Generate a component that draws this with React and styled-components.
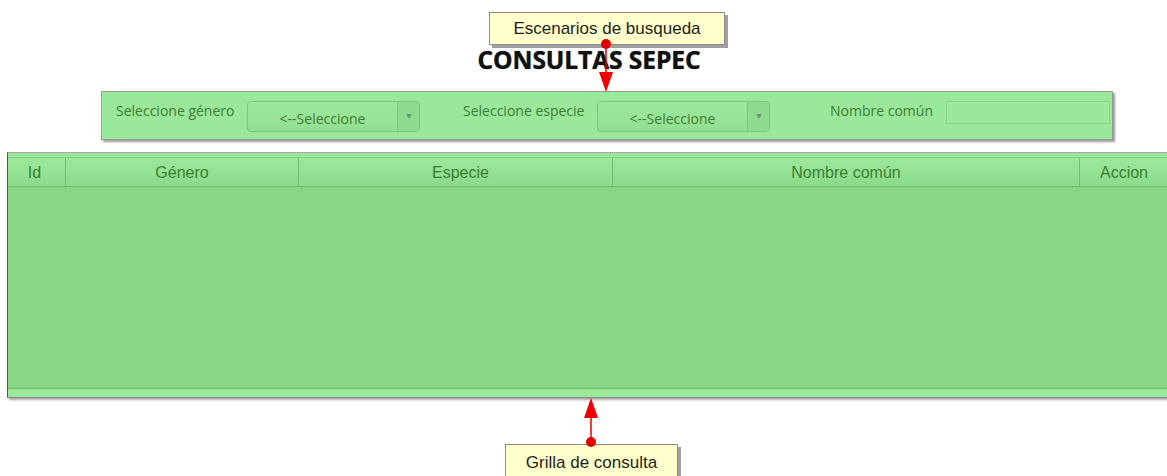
import React from "react";
import styled, { createGlobalStyle } from "styled-components";

const Global = createGlobalStyle`
  html, body { margin: 0; padding: 0; background: #ffffff; }
  body { overflow: hidden; width: 1167px; height: 476px; }
  #root { position: relative; width: 1167px; height: 476px; }
`;

const Page = styled.div`
  position: relative;
  width: 1167px;
  height: 476px;
  overflow: hidden;
  display: flex;
  flex-direction: column;
  padding-top: 46px;
  box-sizing: border-box;
`;

const Title = styled.h1`
  margin: 0;
  padding-left: 11px;
  text-align: center;
  font-family: "Open Sans", "Noto Sans", sans-serif;
  font-weight: 700;
  font-size: 24.6px;
  line-height: 28px;
  color: #111;
  letter-spacing: -0.1px;
  text-shadow: 0 0 1px rgba(0, 0, 0, 0.7);
`;

const SearchPanel = styled.div`
  margin: 17px 0 0 101px;
  width: 1012px;
  height: 49px;
  box-sizing: border-box;
  background: #9ae89a;
  border: 1px solid #9a9a9a;
  box-shadow: 2px 2px 2px rgba(0, 0, 0, 0.4);
  display: flex;
  align-items: flex-start;
  padding-top: 9px;
`;

const Label = styled.div`
  width: ${(p) => p.$w}px;
  padding-left: ${(p) => p.$pl}px;
  box-sizing: border-box;
  font-family: "Open Sans", "Noto Sans", sans-serif;
  font-size: 14px;
  line-height: 20px;
  color: #3e7d33;
  white-space: nowrap;
`;

const Select = styled.div`
  width: 173px;
  height: 31px;
  box-sizing: border-box;
  border: 1px solid #79c679;
  border-radius: 4px;
  background: linear-gradient(#9ee99e, #92e092);
  display: flex;
  overflow: hidden;
`;

const SelectText = styled.div`
  flex: 1;
  text-align: center;
  font-family: "Open Sans", "Noto Sans", sans-serif;
  font-size: 14px;
  line-height: 31px;
  padding-top: 1px;
  color: #3e7d33;
`;

const SelectArrow = styled.div`
  width: 21px;
  border-left: 1px solid #7cc67c;
  background: #8fdb8f;
  display: flex;
  align-items: center;
  justify-content: center;
  &::after {
    content: "";
    border-left: 3.5px solid transparent;
    border-right: 3.5px solid transparent;
    border-top: 5px solid #6f9f6f;
  }
`;

const TextInput = styled.div`
  width: 164px;
  height: 23px;
  box-sizing: border-box;
  border: 1px solid #8bd68b;
  background: #9ae89a;
`;

const Grid = styled.div`
  margin: 12px 0 0 7px;
  width: 1166px;
  flex-shrink: 0;
  box-sizing: border-box;
  border-top: 1px solid #a8a8a8;
  border-left: 1px solid #555;
  border-bottom: 1px solid #8a8a8a;
  box-shadow: 2px 2px 2px rgba(0, 0, 0, 0.35);
  background: #9ae89a;
  padding-top: 4px;
`;

const HeaderRow = styled.div`
  display: grid;
  grid-template-columns: 58px 233px 314px 467px 88px 1fr;
  height: 30px;
  box-sizing: border-box;
  border-top: 1px solid #7fcf7f;
  border-bottom: 1px solid #6cbb6c;
  background: linear-gradient(#9ce99c, #8bdb8b);
`;

const HeadCell = styled.div`
  border-right: ${(p) => (p.$last ? "none" : "1px solid #6fbf6f")};
  text-align: center;
  font-family: "Liberation Sans", Arial, sans-serif;
  font-size: 16px;
  line-height: 28px;
  padding-top: 1px;
  color: #3b7f2e;
  padding-left: ${(p) => p.$shift || 0}px;
  padding-right: ${(p) => p.$rshift || 0}px;
`;

const Body = styled.div`
  height: 201px;
  background: #87d787;
  border-bottom: 1px solid #6dbd6d;
`;

const Footer = styled.div`
  height: 8px;
  background: #9ae89a;
`;

const Callout = styled.div`
  position: absolute;
  left: ${(p) => p.$x}px;
  top: ${(p) => p.$y}px;
  width: ${(p) => p.$w}px;
  height: ${(p) => p.$h}px;
  box-sizing: border-box;
  background: #ffffcc;
  border: 1px solid #8c8c8c;
  box-shadow: 3px 3px 0 #a0a0a0;
  font-family: "Liberation Sans", Arial, sans-serif;
  font-size: 17px;
  color: #1e1e1e;
  display: flex;
  align-items: center;
  justify-content: center;
  padding-top: 1px;
`;

const Overlay = styled.svg`
  position: absolute;
  left: 0;
  top: 0;
  pointer-events: none;
`;

export default function App() {
  return (
    <>
      <Global />
      <Page>
        <Title>CONSULTAS SEPEC</Title>
        <SearchPanel>
          <Label $w={145} $pl={14}>Seleccione género</Label>
          <Select>
            <SelectText>&lt;--Seleccione</SelectText>
            <SelectArrow />
          </Select>
          <Label $w={177} $pl={43}>Seleccione especie</Label>
          <Select>
            <SelectText>&lt;--Seleccione</SelectText>
            <SelectArrow />
          </Select>
          <Label $w={176} $pl={60}>Nombre común</Label>
          <TextInput />
        </SearchPanel>
        <Grid>
          <HeaderRow>
            <HeadCell $rshift={4}>Id</HeadCell>
            <HeadCell>Género</HeadCell>
            <HeadCell $shift={10}>Especie</HeadCell>
            <HeadCell>Nombre común</HeadCell>
            <HeadCell $last>Accion</HeadCell>
            <HeadCell $last />
          </HeaderRow>
          <Body />
          <Footer />
        </Grid>

        <Callout $x={489} $y={12} $w={236} $h={33}>Escenarios de busqueda</Callout>
        <Callout $x={505} $y={444} $w={173} $h={36}>Grilla de consulta</Callout>

        <Overlay width="1167" height="476" viewBox="0 0 1167 476">
          <line x1="606" y1="44" x2="606" y2="74" stroke="#e00000" strokeWidth="1.5" />
          <polygon points="599,72 613,72 606,92" fill="#ee0000" />
          <circle cx="606" cy="44" r="5" fill="#e00000" />
          <line x1="591" y1="442" x2="591" y2="416" stroke="#e00000" strokeWidth="1.5" />
          <polygon points="584,418 598,418 591,398" fill="#ee0000" />
          <circle cx="591" cy="442" r="5" fill="#e00000" />
        </Overlay>
      </Page>
    </>
  );
}
